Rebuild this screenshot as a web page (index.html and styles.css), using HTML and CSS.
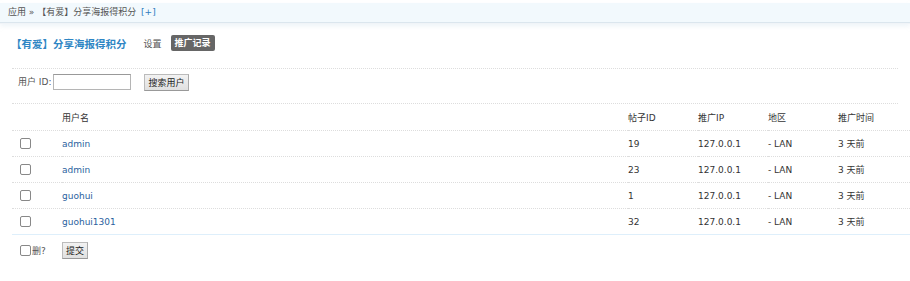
FILE: index.html
```html
<!DOCTYPE html>
<html>
<head>
<meta charset="utf-8">
<link rel="stylesheet" href="styles.css">
</head>
<body>
<div class="navbar"><span class="crumb">应用 » 【有爱】分享海报得积分</span> <a class="plus">[+]</a></div>
<div class="titlebar">
  <h3 class="title">【有爱】分享海报得积分</h3>
  <a class="tab">设置</a>
  <a class="tab current">推广记录</a>
</div>
<div class="searchrow">
  <label class="lbl">用户 ID:</label>
  <input class="txt" type="text">
  <button class="btn search">搜索用户</button>
</div>
<table class="tb">
  <colgroup><col class="c1"><col class="c2"><col class="c3"><col class="c4"><col class="c5"><col></colgroup>
  <tr class="header"><th></th><th>用户名</th><th>帖子ID</th><th>推广IP</th><th>地区</th><th>推广时间</th></tr>
  <tr><td><span class="cb"></span></td><td><a class="lnk">admin</a></td><td>19</td><td>127.0.0.1</td><td>- LAN</td><td>3 天前</td></tr>
  <tr><td><span class="cb"></span></td><td><a class="lnk">admin</a></td><td>23</td><td>127.0.0.1</td><td>- LAN</td><td>3 天前</td></tr>
  <tr><td><span class="cb"></span></td><td><a class="lnk">guohui</a></td><td>1</td><td>127.0.0.1</td><td>- LAN</td><td>3 天前</td></tr>
  <tr class="last"><td><span class="cb"></span></td><td><a class="lnk">guohui1301</a></td><td>32</td><td>127.0.0.1</td><td>- LAN</td><td>3 天前</td></tr>
  <tr class="foot"><td><span class="cb"></span><span class="del">删?</span></td><td colspan="5"><button class="btn">提交</button></td></tr>
</table>
</body>
</html>
```
FILE: styles.css
```css
html, body { margin: 0; padding: 0; background: #fff; }
body {
  font-family: "DejaVu Sans", Verdana, "Noto Sans CJK SC", sans-serif;
  font-size: 9px;
  color: #333;
}
.navbar {
  margin-top: 3px;
  height: 19px;
  line-height: 19px;
  padding-left: 8px;
  background: #f2f9fd;
  border-bottom: 1px solid #dbe6ee;
  box-shadow: 0 1px 0 #f0f4f8, 0 3px 5px rgba(200,220,235,0.35);
  color: #555;
  font-size: 9px;
}
.plus { color: #2f7dbf; margin-left: 2px; }
.titlebar {
  display: flex;
  align-items: center;
  height: 20px;
  margin-top: 10px;
  padding-left: 11px;
}
.title {
  margin: 0 17px 0 0;
  font-size: 10.5px;
  font-weight: bold;
  color: #2e86c4;
}
.tab {
  color: #555;
  font-size: 9px;
  margin-right: 9px;
}
.tab.current {
  background: #666;
  color: #fff;
  font-weight: bold;
  padding: 1px 4px;
  height: 14px;
  line-height: 14px;
  border-radius: 2px;
}
.searchrow {
  margin: 15px 12px 0 12px;
  border-top: 1px dotted #ddd;
  border-bottom: 1px dotted #ddd;
  height: 34px;
  box-sizing: border-box;
  height: 36px;
  display: flex;
  align-items: flex-start;
  padding: 5px 0 0 6px;
}
.lbl { color: #555; margin-right: 2px; line-height: 16px; }
.txt {
  width: 78px;
  height: 16px;
  box-sizing: border-box;
  border: 1px solid #b5b5b5;
  border-top-color: #999;
  padding: 0;
  margin: 0 13px 0 0;
}
.btn {
  font-family: "DejaVu Sans", "Noto Sans CJK SC", sans-serif;
  font-size: 9px;
  color: #222;
  height: 17px;
  padding: 0 3px;
  background: linear-gradient(#f2f2f2, #e0e0e0);
  border: 1px solid #bbb;
  border-bottom-color: #999;
  border-right-color: #aaa;
  margin: 0;
}
.tb {
  margin-left: 12px;
  width: 898px;
  border-collapse: collapse;
  table-layout: fixed;
}
.c1 { width: 50px; }
.c2 { width: 566px; }
.c3, .c4, .c5 { width: 70px; }
.tb th, .tb td {
  height: 25px;
  padding: 0;
  text-align: left;
  font-weight: normal;
  border-bottom: 1px dotted #ddd;
  white-space: nowrap;
}
.tb tr.header th { height: 26px; }
.tb tr.last td { border-bottom: 1px solid #deeffb; }
.tb tr.foot td { border-bottom: none; height: 30px; }
.lnk { color: #2a5f9e; }
.cb {
  display: inline-block;
  width: 9px;
  height: 9px;
  border: 1px solid #888;
  border-radius: 2px;
  margin-left: 8px;
  vertical-align: middle;
  background: #fff;
}
.foot .cb { margin-right: 1px; }
.del { color: #555; vertical-align: middle; }
```
